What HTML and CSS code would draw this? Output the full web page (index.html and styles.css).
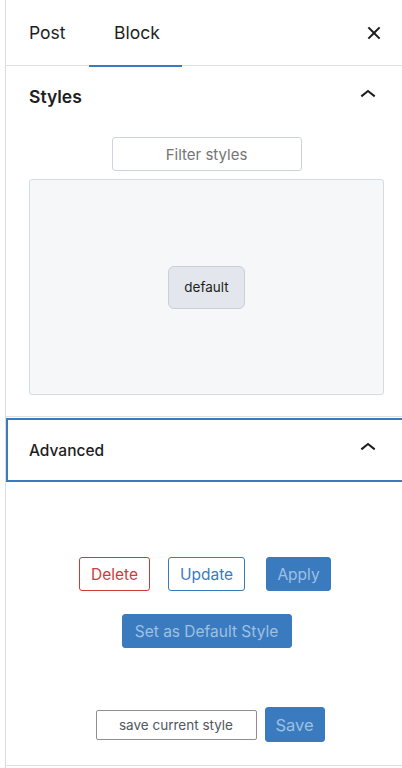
FILE: index.html
```html
<!DOCTYPE html>
<html lang="en">
<head>
<meta charset="utf-8">
<title>Block settings</title>
<link rel="stylesheet" href="styles.css">
</head>
<body>
<div class="sidebar">
  <div class="tabs">
    <div class="tab tab-post">Post</div>
    <div class="tab tab-block active">Block</div>
    <div class="spacer"></div>
    <button class="icon-btn close" aria-label="Close">
      <svg viewBox="0 0 24 24" width="32" height="32"><path d="M12 13.06l3.712 3.713 1.061-1.06L13.061 12l3.712-3.712-1.06-1.06L12 10.938 8.288 7.227l-1.061 1.06L10.939 12l-3.712 3.712 1.06 1.061L12 13.061z"/></svg>
    </button>
  </div>

  <div class="panel styles-panel">
    <div class="panel-head">
      <span class="panel-title styles-title">Styles</span>
      <svg class="chev" viewBox="0 0 24 24" width="32" height="32"><path d="M6.5 12.4L12 8l5.5 4.4-.9 1.2L12 10l-4.5 3.6-1-1.2z"/></svg>
    </div>
    <div class="styles-body">
      <div class="filter">Filter styles</div>
      <div class="preview">
        <div class="style-chip">default</div>
      </div>
    </div>
  </div>

  <div class="panel adv-panel">
    <div class="panel-head adv-head">
      <span class="panel-title adv-title">Advanced</span>
      <svg class="chev" viewBox="0 0 24 24" width="32" height="32"><path d="M6.5 12.4L12 8l5.5 4.4-.9 1.2L12 10l-4.5 3.6-1-1.2z"/></svg>
    </div>
    <div class="adv-body">
      <div class="row row1">
        <button class="btn btn-delete">Delete</button>
        <button class="btn btn-update">Update</button>
        <button class="btn btn-primary">Apply</button>
      </div>
      <div class="row row2">
        <button class="btn btn-primary">Set as Default Style</button>
      </div>
      <div class="row row3">
        <div class="save-input">save current style</div>
        <button class="btn btn-primary btn-save">Save</button>
      </div>
    </div>
  </div>
</div>
</body>
</html>
```

FILE: styles.css
```css
html, body {
  margin: 0;
  padding: 0;
  background: #fff;
  overflow: hidden;
}
body {
  font-family: Inter, "Noto Sans", "Liberation Sans", sans-serif;
  color: #1e1e1e;
  width: 402px;
  height: 768px;
}
.sidebar {
  margin-left: 5px;
  border-left: 1px solid #dcdcde;
  height: 768px;
  box-sizing: border-box;
}
button {
  font-family: inherit;
}

/* tabs */
.tabs {
  display: flex;
  align-items: center;
  height: 65px;
  border-bottom: 1px solid #e0e0e0;
  padding-right: 12px;
}
.tab {
  position: relative;
  height: 65px;
  box-sizing: border-box;
  display: flex;
  align-items: center;
  font-size: 17.5px;
  color: #1e1e1e;
}
.tab-post {
  width: 83px;
  padding-left: 23px;
}
.tab-block {
  width: 93px;
  padding-left: 25px;
}
.tab.active::after {
  content: "";
  position: absolute;
  left: 0;
  right: 0;
  bottom: -2px;
  height: 2px;
  background: #3a7bbf;
}
.spacer { flex: 1; }
.icon-btn {
  border: 0;
  background: none;
  padding: 0;
  width: 32px;
  height: 32px;
  display: flex;
}
.icon-btn svg { fill: #1e1e1e; }

/* panels */
.panel-head {
  display: flex;
  align-items: center;
  justify-content: space-between;
  height: 62px;
  padding: 0 18px 0 23px;
}
.panel-title {
  font-size: 17.5px;
  font-weight: 600;
  color: #1e1e1e;
}
.styles-title { margin-top: -1px; }
.chev { fill: #1e1e1e; }
.styles-panel .chev { margin-top: -4px; }

.styles-panel {
  border-bottom: 1px solid #e0e0e0;
}
.styles-body {
  padding: 9px 18px 21px 23px;
  display: flex;
  flex-direction: column;
  align-items: center;
}
.filter {
  width: 190px;
  height: 34px;
  box-sizing: border-box;
  border: 1px solid #cdd4de;
  border-radius: 3px;
  display: flex;
  align-items: center;
  justify-content: center;
  font-size: 15px;
  color: #757575;
  margin-bottom: 8px;
}
.preview {
  align-self: stretch;
  height: 216px;
  box-sizing: border-box;
  border: 1px solid #d5dbe3;
  border-radius: 3px;
  background: #f6f7f9;
  display: flex;
  align-items: center;
  justify-content: center;
}
.style-chip {
  width: 77px;
  height: 43px;
  box-sizing: border-box;
  border: 1px solid #c8d0da;
  border-radius: 6px;
  background: #e3e7ed;
  display: flex;
  align-items: center;
  justify-content: center;
  font-size: 13.5px;
  color: #1e1e1e;
}

/* advanced */
.adv-panel {
  margin-top: 1px;
  border-bottom: 1px solid #e0e0e0;
  height: 348px;
  box-sizing: border-box;
}
.adv-head {
  height: 64px;
  box-sizing: border-box;
  border: 2px solid #3a7bbf;
  margin-right: -4px;
  padding: 0 20px 0 21px;
}
.adv-title {
  font-size: 15.5px;
  font-weight: 500;
}
.adv-head .chev { margin-top: -4px; }
.adv-body {
  padding-top: 75px;
  display: flex;
  flex-direction: column;
  align-items: center;
}
.row {
  display: flex;
  justify-content: center;
  align-items: center;
}
.row1 { gap: 18px; margin-left: 2px; }
.row1 .btn-primary { margin-left: 3px; }
.row2 { margin-top: 23px; margin-left: 5px; }
.row3 { margin-top: 59px; gap: 8px; margin-left: 12px; }

.btn {
  height: 34px;
  box-sizing: border-box;
  padding: 0 11px;
  border-radius: 3px;
  font-size: 15.5px;
  background: #fff;
  display: flex;
  align-items: center;
  justify-content: center;
  cursor: pointer;
}
.btn-delete {
  width: 71px;
  border: 1px solid #cc3b3b;
  color: #cc3b3b;
}
.btn-update {
  width: 77px;
  border: 1px solid #3a7bbf;
  color: #3a7bbf;
}
.btn-primary {
  border: 1px solid #3a7bbf;
  background: #3a7bbf;
  color: #9fc0e3;
}
.row1 .btn-primary { width: 65px; }
.row2 .btn-primary { width: 170px; }
.btn-save {
  width: 60px;
  height: 35px;
  font-size: 16.5px;
}
.save-input {
  width: 161px;
  height: 30px;
  box-sizing: border-box;
  border: 1px solid #8c8f94;
  border-radius: 2px;
  display: flex;
  align-items: center;
  justify-content: center;
  font-size: 13.5px;
  color: #50575e;
}
```
